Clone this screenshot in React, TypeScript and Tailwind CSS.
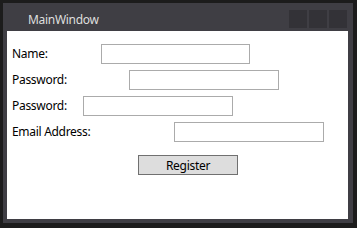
export default function App() {
  return (
    <div className="w-[357px] h-[228px] bg-[#1c1c1c] pt-[3px] pl-[3px] pr-[4px] pb-[5px]">
      <div className="h-full bg-[#3f3e44] flex flex-col pl-[4px] pr-[5px] pb-[4px]">
        {/* title bar */}
        <div className="h-[28px] shrink-0 flex items-start">
          <span className="mt-[9px] ml-[21px] text-[12px] leading-4 tracking-[-0.3px] text-[#dedede] font-['Noto_Sans',sans-serif]">
            MainWindow
          </span>
          <div className="ml-auto mt-[7px] mr-[1px] flex gap-[2px]">
            <div className="w-[18px] h-[18px] bg-[#333237]" />
            <div className="w-[18px] h-[18px] bg-[#333237]" />
            <div className="w-[18px] h-[18px] bg-[#333237]" />
          </div>
        </div>

        {/* client area */}
        <div className="flex-1 bg-white pt-[13px] pl-[5px] font-['Noto_Sans',sans-serif] text-[12px] tracking-[-0.3px] text-black">
          <div className="flex flex-col gap-[6px]">
            <div className="h-[20px] grid grid-cols-[89px_149px] items-center">
              <span>Name:</span>
              <div className="h-[20px] border border-[#ababab] bg-white" />
            </div>
            <div className="h-[20px] grid grid-cols-[117px_150px] items-center">
              <span>Password:</span>
              <div className="h-[20px] border border-[#ababab] bg-white" />
            </div>
            <div className="h-[20px] grid grid-cols-[71px_150px] items-center">
              <span>Password:</span>
              <div className="h-[20px] border border-[#ababab] bg-white" />
            </div>
            <div className="h-[20px] grid grid-cols-[162px_150px] items-center">
              <span className="whitespace-nowrap">Email Address:</span>
              <div className="h-[20px] border border-[#ababab] bg-white" />
            </div>
          </div>
          <div className="mt-[13px] ml-[126px]">
            <button className="w-[100px] h-[20px] bg-[#dddddd] border border-[#707070] text-[12px] leading-none tracking-[-0.3px] text-black flex items-center justify-center pt-[1px]">
              Register
            </button>
          </div>
        </div>
      </div>
    </div>
  );
}
